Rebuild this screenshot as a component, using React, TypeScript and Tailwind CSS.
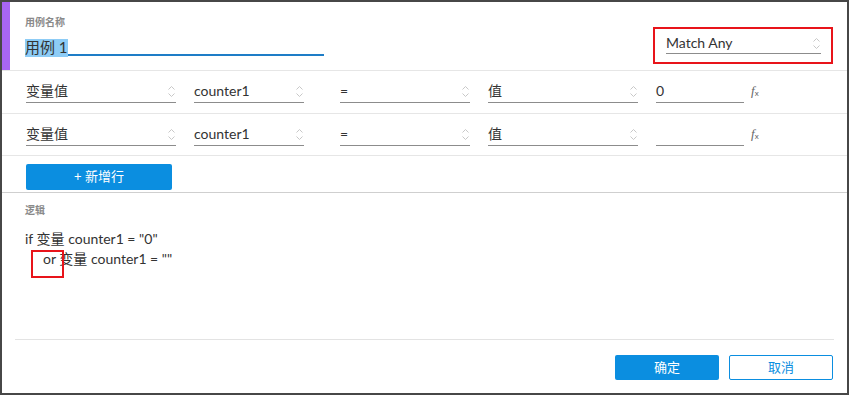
import React from 'react'

const font = { fontFamily: 'Lato, "Noto Sans CJK SC", sans-serif' }

function Chevron() {
  return (
    <svg width="9" height="13" viewBox="0 0 9 13" className="shrink-0">
      <path d="M1.5 4.5 L4.5 1.5 L7.5 4.5" fill="none" stroke="#c8c8c8" strokeWidth="1" />
      <path d="M1.5 8.5 L4.5 11.5 L7.5 8.5" fill="none" stroke="#c8c8c8" strokeWidth="1" />
    </svg>
  )
}

function Field({ value, width, ml, select = true }: { value: string; width: string; ml: string; select?: boolean }) {
  return (
    <div className={`${ml} ${width} flex h-[23px] items-center justify-between border-b border-[#8c8c8c]`}>
      <span className="text-[14px] leading-[18px] text-[#333]">{value}</span>
      {select && <Chevron />}
    </div>
  )
}

function Fx() {
  return (
    <span className="ml-[7px] mt-[4px] flex items-end text-[#666]">
      <span className="text-[13px] italic leading-none" style={{ fontFamily: '"Liberation Serif", serif' }}>
        f
      </span>
      <span className="text-[8px] leading-none">x</span>
    </span>
  )
}

function ConditionRow({ last, second }: { last: string; second?: boolean }) {
  return (
    <div className={`flex items-start border-b border-[#e6e6e6] pt-[9px] ${second ? 'h-[42px]' : 'h-[43px]'}`}>
      <Field value="变量值" width="w-[150px]" ml="ml-[24px]" />
      <Field value="counter1" width="w-[110px]" ml="ml-[18px]" />
      <Field value="=" width="w-[130px]" ml="ml-[36px]" />
      <Field value="值" width="w-[150px]" ml="ml-[18px]" />
      <Field value={last} width="w-[88px]" ml="ml-[18px]" select={false} />
      <Fx />
    </div>
  )
}

export default function App() {
  return (
    <div className="h-[395px] w-[849px] border-2 border-[#474747] bg-white" style={font}>
      {/* Header */}
      <div className="flex h-[69px] items-start border-b border-[#e6e6e6]">
        <div className="h-full w-[8px] shrink-0 bg-[#a866f4]" />
        <div className="pl-[15px] pt-[14px]">
          <div className="text-[10px] font-bold leading-[12px] text-[#8a8a8a]">用例名称</div>
          <div className="mt-[7px] h-[21px] w-[299px] border-b-2 border-[#1e7dc7]">
            <span className="inline-block h-[18px] bg-[#8dccf6] text-[15px] leading-[17px] text-[#333]">用例 1</span>
          </div>
        </div>
        <div className="ml-auto mr-[14px] mt-[25px] h-[37px] w-[180px] border-2 border-[#e8141a] pl-[11px] pr-[10px]">
          <div className="mt-[4px] flex h-[21px] items-center justify-between border-b border-[#8c8c8c]">
            <span className="text-[14px] leading-[18px] text-[#333]">Match Any</span>
            <Chevron />
          </div>
        </div>
      </div>

      <ConditionRow last="0" />
      <ConditionRow last="" second />

      {/* Add row */}
      <div className="h-[37px] border-b border-[#cfcfcf] pl-[24px] pt-[8px]">
        <button className="flex h-[26px] w-[146px] items-center justify-center rounded-[2px] bg-[#0b8ee0] text-[13px] text-white">
          + 新增行
        </button>
      </div>

      {/* Logic */}
      <div className="relative h-[146px] pl-[23px] pt-[11px]">
        <div className="text-[10px] font-bold leading-[12px] text-[#8a8a8a]">逻辑</div>
        <div className="mt-[13px] text-[14px] leading-[20px] text-[#333]">
          <div>if 变量 counter1 = "0"</div>
          <div className="pl-[18px]">or 变量 counter1 = ""</div>
        </div>
        <div className="absolute left-[29px] top-[57px] h-[28px] w-[33px] border-2 border-[#e8141a]" />
      </div>
      <div className="mx-[13px] h-px bg-[#e3e3e3]" />

      {/* Footer */}
      <div className="flex justify-end gap-[10px] pr-[14px] pt-[15px]">
        <button className="flex h-[25px] w-[104px] items-center justify-center rounded-[2px] bg-[#0b8ee0] text-[13px] text-white">
          确定
        </button>
        <button className="flex h-[25px] w-[104px] items-center justify-center rounded-[2px] border border-[#0b8ee0] bg-white text-[13px] text-[#0b8ee0]">
          取消
        </button>
      </div>
    </div>
  )
}
